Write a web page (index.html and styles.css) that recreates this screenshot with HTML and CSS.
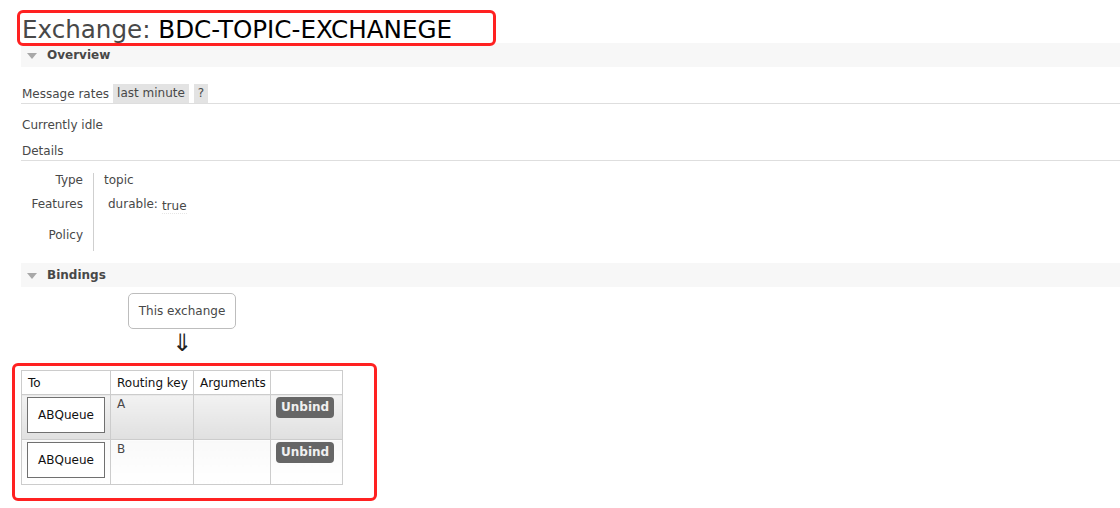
FILE: index.html
```html
<!DOCTYPE html>
<html lang="en">
<head>
<meta charset="utf-8">
<title>Exchange: BDC-TOPIC-EXCHANEGE</title>
<link rel="stylesheet" href="styles.css">
</head>
<body>
<div class="page">
  <h1 class="title">Exchange: <b>BDC-TOPIC-EXCHANEGE</b></h1>

  <section class="section">
    <h2 class="section-head"><span class="tri"></span>Overview</h2>
    <div class="section-body">
      <h3 class="rates"><span class="rates-label">Message rates</span><span class="opt">last minute</span><span class="opt help">?</span></h3>
      <p class="idle">Currently idle</p>
      <h3 class="sub">Details</h3>
      <div class="facts">
        <div class="fk">Type</div>
        <div class="fv">topic</div>
        <div class="fk">Features</div>
        <div class="fv"><div class="feat"><span class="feat-key">durable:</span><abbr class="feat-val">true</abbr></div></div>
        <div class="fk">Policy</div>
        <div class="fv"></div>
      </div>
    </div>
  </section>

  <section class="section">
    <h2 class="section-head"><span class="tri"></span>Bindings</h2>
    <div class="bind-flow">
      <div class="this-ex">This exchange</div>
      <div class="arrow">⇓</div>
    </div>
    <table class="list">
      <colgroup>
        <col class="c-to">
        <col class="c-key">
        <col class="c-args">
        <col class="c-act">
      </colgroup>
      <thead>
        <tr><th>To</th><th>Routing key</th><th>Arguments</th><th></th></tr>
      </thead>
      <tbody>
        <tr class="alt1">
          <td class="box-cell"><div class="qbox">ABQueue</div></td>
          <td>A</td>
          <td></td>
          <td class="box-cell"><button class="btn" type="button">Unbind</button></td>
        </tr>
        <tr class="alt2">
          <td class="box-cell"><div class="qbox">ABQueue</div></td>
          <td>B</td>
          <td></td>
          <td class="box-cell"><button class="btn" type="button">Unbind</button></td>
        </tr>
      </tbody>
    </table>
  </section>

  <div class="hl hl-title"></div>
  <div class="hl hl-table"></div>
</div>
</body>
</html>
```

FILE: styles.css
```css
html, body {
  margin: 0;
  padding: 0;
  background: #fff;
}

body {
  font-family: "DejaVu Sans", Verdana, sans-serif;
  font-size: 12px;
  color: #484848;
  width: 1120px;
  height: 508px;
  overflow: hidden;
}

.page {
  position: relative;
  padding-left: 21px;
  display: flex;
  flex-direction: column;
}

.title {
  margin: 17px 0 0 1px;
  font-size: 24.6px;
  line-height: 26px;
  font-weight: normal;
  color: #484848;
  white-space: nowrap;
}

.title b {
  font-weight: normal;
  color: #000;
}

.section {
  display: flex;
  flex-direction: column;
}

.section-head {
  margin: 0;
  box-sizing: border-box;
  height: 24px;
  padding-top: 1px;
  line-height: 23px;
  font-size: 12px;
  font-weight: bold;
  color: #484848;
  background: #f7f7f7;
  display: flex;
  align-items: center;
  padding-left: 6px;
}

.tri {
  width: 0;
  height: 0;
  border-left: 5px solid transparent;
  border-right: 5px solid transparent;
  border-top: 6px solid #a8a8a8;
  margin-right: 10px;
}

.section + .section .section-head {
  margin-top: 12px;
}

.section-body {
  display: flex;
  flex-direction: column;
}

.rates {
  margin: 17px 0 0 0;
  box-sizing: border-box;
  height: 20px;
  padding-top: 1px;
  line-height: 18px;
  font-size: 12px;
  font-weight: normal;
  display: flex;
  gap: 3px;
  border-bottom: 1px solid #dedede;
}

.rates-label {
  padding-left: 1px;
  margin-right: 1px;
}

.opt {
  background: #e3e3e3;
  padding: 0 4px;
  margin-top: -1px;
  line-height: 19px;
}

.help {
  margin-left: 2px;
}

.idle {
  margin: 12px 0 0 1px;
  padding-top: 1px;
  line-height: 16px;
}

.sub {
  margin: 9px 0 0 0;
  padding: 1px 0 1px 1px;
  line-height: 16px;
  font-size: 12px;
  font-weight: normal;
  border-bottom: 1px solid #dedede;
}

.facts {
  margin-top: 12px;
  display: grid;
  grid-template-columns: 72px auto;
  grid-template-rows: 23px 31px 24px;
  justify-content: start;
  line-height: 13px;
}

.fk {
  text-align: right;
  padding: 1px 10px 0 0;
}

.fv {
  border-left: 1px solid #cfcfcf;
  padding: 1px 0 0 10px;
  min-width: 120px;
}

.fk:nth-child(3),
.fv:nth-child(4) {
  padding-top: 2px;
}

.fk:nth-child(5) {
  padding-top: 2px;
}

.feat {
  display: flex;
  gap: 4px;
  padding-left: 4px;
}

.feat-val {
  text-decoration: none;
  padding-top: 2px;
  border-bottom: 1px dotted #e6e6e6;
  align-self: flex-start;
}

.bind-flow {
  margin: 6px 0 0 107px;
  width: 108px;
  display: flex;
  flex-direction: column;
  align-items: center;
}

.this-ex {
  box-sizing: border-box;
  width: 108px;
  height: 36px;
  padding-top: 1px;
  line-height: 33px;
  text-align: center;
  border: 1px solid #bdbdbd;
  border-radius: 5px;
}

.arrow {
  margin-top: 1px;
  height: 26px;
  line-height: 26px;
  font-size: 24px;
  color: #222;
}

.list {
  margin-top: 14px;
  border-collapse: collapse;
  table-layout: fixed;
  width: 321px;
}

.c-to { width: 89px; }
.c-key { width: 83px; }
.c-args { width: 77px; }
.c-act { width: 72px; }

.list th,
.list td {
  border: 1px solid #cccccc;
  text-align: left;
  vertical-align: top;
  line-height: 14px;
  font-size: 12px;
  white-space: nowrap;
}

.list th {
  font-weight: normal;
  color: #111;
  background: #fff;
  padding: 5px 0 4px 6px;
}

.list td {
  padding: 2px 6px 6px;
  color: #484848;
}

.list td.box-cell {
  padding-left: 5px;
  padding-right: 5px;
}

.list tr.alt1 td {
  background: linear-gradient(to bottom, #f2f2f2, #e0e0e0);
}

.list tr.alt2 td {
  background: linear-gradient(to bottom, #f9f9f9, #ffffff);
}

.qbox {
  box-sizing: border-box;
  width: 78px;
  height: 36px;
  padding-top: 1px;
  line-height: 33px;
  text-align: center;
  border: 1px solid #707070;
  background: #fff;
  color: #111;
}

.btn {
  font-family: "DejaVu Sans", Verdana, sans-serif;
  font-size: 12px;
  font-weight: bold;
  line-height: 21px;
  height: 21px;
  padding: 0 5px;
  margin: 0;
  border: 0;
  border-radius: 4px;
  background: #666;
  color: #f0f0f0;
  display: block;
}

.hl {
  position: absolute;
  box-sizing: border-box;
  border: 3px solid #ff2121;
  border-radius: 6px;
  pointer-events: none;
}

.hl-title {
  left: 17px;
  top: 10px;
  width: 479px;
  height: 36px;
}

.hl-table {
  left: 12px;
  top: 363px;
  width: 365px;
  height: 138px;
}
```
